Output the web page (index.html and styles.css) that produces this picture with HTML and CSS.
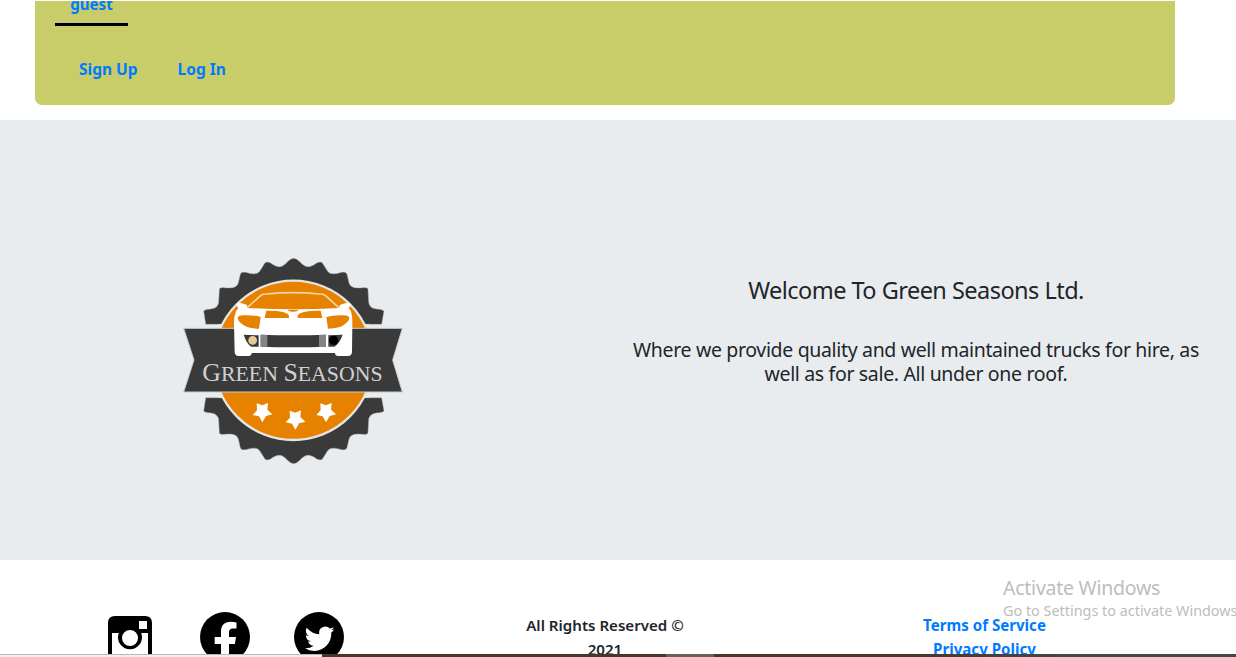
FILE: index.html
```
<!DOCTYPE html>
<html lang="en">
<head>
<meta charset="utf-8">
<title>Green Seasons Ltd.</title>
<link rel="stylesheet" href="styles.css">
</head>
<body>
<header class="navbar">
  <a class="user"><span class="t-guest">guest</span></a>
  <nav class="links"><a class="t-sign">Sign Up</a><a class="t-log">Log In</a></nav>
</header>
<main class="hero">
  <div class="hero-logo">
    <svg class="logo" viewBox="0 0 735 660" aria-label="Green Seasons">
      <defs>
        <path id="gear" d="M107 223 L101 184 Q102 178 122 177 Q147 174 146 152 L148 118 Q149 111 165 113 Q201 117 205 98 L211 72 Q214 64 228 67 Q258 77 268 65 L284 40 Q289 33 302 39 Q323 55 337 48 Q345 44 355 33 Q371 17 387 33 Q397 44 405 48 Q419 55 440 39 Q453 33 458 40 L474 65 Q484 77 514 67 Q528 64 531 72 L537 98 Q541 117 577 113 Q593 111 594 118 L596 152 Q595 174 620 177 Q640 178 642 184 L635 223 Z"/>
      </defs>
      <g fill="#3a3a3a" stroke="#b9bcbe" stroke-width="1.500">
        <use href="#gear"/>
        <use href="#gear" transform="matrix(1 0 0 -1 0 666)"/>
      </g>
      <path fill="#e8ecef" d="M145 223h452v220H145z"/>
      <circle cx="370" cy="331" r="239" fill="#e68200" stroke="#e4e5e5" stroke-width="7"/>
      <path fill="#3a3a3a" stroke="#c9cccf" stroke-width="3" d="M41 235H697L668 330L697 426H41L72 330Z"/>
      <path fill="none" stroke="#f6d6a6" stroke-width="5" d="M229 175L274 135Q279 132 290 132Q370 124 448 132Q459 132 464 135L509 175"/>
      <path fill="#fff" d="M198 165Q201 157 216 160L231 165V174Q370 182 509 174V165L526 160Q540 157 543 165L536 174L543 184Q548 202 547 225L546 306Q545 318 534 318H505Q495 318 495 309H245Q245 318 235 318H206Q194 317 194 305L192 225Q191 202 198 184L205 174Z"/>
      <path fill="#e68200" d="M203 205Q202 197 220 196Q249 194 272 201L267 236Q229 236 213 220Q204 212 203 205ZM538 205Q539 197 521 196Q492 194 469 201L474 236Q512 236 528 220Q537 212 538 205ZM289 182Q350 181 357 197V204H284ZM452 182Q390 181 383 197V204H457ZM353 179H387Q382 185 370 185Q357 185 353 179Z"/>
      <path fill="#3a3a3a" d="M221 254L266 256V290H244Q230 282 221 254ZM518 254L475 256V290H493Q509 280 518 254ZM272 254Q370 257 468 254V290Q370 294 272 290Z"/>
      <path fill="#858585" d="M272 254L292 255V291L272 290ZM447 255L468 254V290L447 291Z"/>
      <circle cx="248" cy="271" r="13" fill="#e8c795"/><circle cx="491" cy="271" r="14" fill="#000"/>
      <text class="logo-text" x="97" y="394" textLength="541" lengthAdjust="spacingAndGlyphs"><tspan class="cap">G</tspan>REEN <tspan class="cap">S</tspan>EASONS</text>
      <g fill="#fff">
        <path id="star" d="M260 460L277 466L294 459L292 479L307 493L288 498L277 517L267 499L248 495L261 481Z"/>
        <use href="#star" transform="translate(99 22)"/>
        <use href="#star" transform="translate(191 0)"/>
      </g>
    </svg>
  </div>
  <div class="hero-copy">
    <h1><span class="t-welcome">Welcome To Green Seasons Ltd.</span></h1>
    <p><span class="t-l1">Where we provide quality and well maintained trucks for hire, as</span><br><span class="t-l2">well as for sale. All under one roof.</span></p>
  </div>
</main>
<footer class="footer">
  <div class="social">
    <svg class="insta" viewBox="0 0 44 44"><path fill-rule="evenodd" d="M7 0H37Q44 0 44 7V37Q44 44 37 44H7Q0 44 0 37V7Q0 0 7 0ZM31 5V13H39V5ZM4 17V40H40V17H33.200A12 12 0 1 1 10.800 17ZM22 14A8 8 0 1 0 22 30A8 8 0 1 0 22 14Z"/></svg>
    <svg class="round" viewBox="0 0 50 50"><circle cx="25" cy="25" r="25"/><path fill="#fff" d="M21 50V32H14.700V25H21V19.500C21 13.200 24.700 9.800 30.500 9.800Q33.500 9.800 36.500 10.400V16.500H33.200C30 16.500 29 18.400 29 20.500V25H36L34.900 32H29V50Z"/></svg>
    <svg class="round" viewBox="0 0 50 50"><circle cx="25" cy="25" r="25"/><path fill="#fff" d="M40.500 17.200Q39 18 37.200 18.200Q39 17.100 39.700 15.200Q37.900 16.200 35.900 16.600A6.200 6.200 0 0 0 25.300 22.200Q17.900 21.900 12.700 15.700Q10.300 20.500 14.600 24Q13.100 23.900 11.800 23.200Q12 28 16.700 29.300Q15.300 29.700 14 29.400Q15.300 33.300 19.700 33.700Q16.200 36.500 11 36.300Q15 38.900 20.200 38.900C31 38.900 37.700 30 37.300 20.500Q39.200 19.200 40.500 17.200Z"/></svg>
  </div>
  <div class="rights"><span class="t-rights">All Rights Reserved ©</span><br><span class="t-year">2021</span></div>
  <div class="legal"><a class="t-terms">Terms of Service</a><br><a class="t-priv">Privacy Policy</a></div>
</footer>
<aside class="watermark"><div class="t-act">Activate Windows</div><div class="t-go">Go to Settings to activate Windows</div></aside>
<div class="taskbar"><div class="status"></div><div class="bar"><div class="active"></div></div></div>
</body>
</html>
```
FILE: styles.css
```
* { box-sizing: border-box; }
html, body { height: 657px; overflow: hidden; }
body { margin: 0; position: relative; background: #fff; color: #212529; font: 16px/24px "Noto Sans", "Open Sans", sans-serif; }
a { color: #007bff; font-weight: 700; }
span, a { white-space: nowrap; }
.navbar { margin: 1px 61px 15px 35px; height: 104px; padding: 0 20px; background: #c8cd69; border-radius: 0 0 7px 7px; overflow: hidden; }
.user { display: block; width: 73px; height: 25px; border-bottom: 3px solid #000; text-align: center; line-height: 6px; }
.links { display: flex; gap: 40px; padding: 31px 24px 0; }
.hero { height: 440px; background: #e8ecef; display: flex; }
.hero-logo { width: 618px; padding: 130px 0 0 170px; }
.logo { display: block; width: 245px; height: 220px; }
.logo-text { font: 66px "Liberation Serif", serif; fill: #d0d0d0; }
.cap { font-size: 78px; }
.hero-copy { width: 596px; text-align: center; padding-top: 156px; }
h1 { margin: 0 0 33px; font-size: 23.5px; line-height: 29px; font-weight: 400; letter-spacing: -.53px; }
p { margin: 0; font-size: 19.5px; line-height: 24px; letter-spacing: -.34px; }
.footer { display: flex; height: 97px; padding-top: 52px; overflow: hidden; }
.social { width: 414px; display: flex; padding-left: 108px; }
.insta { width: 44px; height: 44px; margin: 4px 48px 0 0; }
.round { width: 50px; height: 50px; margin-right: 44px; }
.rights { width: 382px; text-align: center; font-weight: 600; padding-top: 1px; }
.legal { width: 377px; text-align: center; padding-top: 1px; }
.t-guest, .t-terms, .t-priv, .t-rights, .t-year { font-size: 15.1px; }
.t-sign, .t-log { font-size: 15.5px; }
.watermark { position: absolute; left: 1003px; top: 576px; color: #bdbdbd; white-space: nowrap; width: 233px; }
.t-act { font-size: 19.5px; line-height: 24px; letter-spacing: -.25px; }
.t-go { font-size: 14.4px; line-height: 21px; }
.taskbar { position: absolute; left: 0; right: 0; bottom: 0; height: 3px; display: flex; }
.status { width: 322px; background: #f0f0f0; border-top: 1px solid #b8b8b8; }
.bar { flex: 1; background: linear-gradient(90deg, #46382b 0, #46382b 65%, #43464a 80%, #43464a); }
.active { margin-left: 344px; width: 48px; height: 3px; background: #6b6158; }
```
